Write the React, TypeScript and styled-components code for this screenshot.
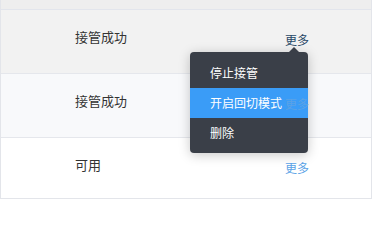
import styled, { createGlobalStyle } from "styled-components"

const GlobalStyle = createGlobalStyle`
  html, body {
    margin: 0;
    padding: 0;
    background: #fff;
  }
  body {
    font-family: "Noto Sans CJK SC", "Noto Sans", sans-serif;
    font-size: 13px;
  }
`

type Row = {
  status: string
  tone: "hover" | "stripe" | "plain"
  height: number
  open?: boolean
}

const rows: Row[] = [
  { status: "接管成功", tone: "hover", height: 64, open: true },
  { status: "接管成功", tone: "stripe", height: 64 },
  { status: "可用", tone: "plain", height: 60 },
]

const menuItems = ["停止接管", "开启回切模式", "删除"]

const App = () => {
  return (
    <>
      <GlobalStyle />
      <TableStyled>
        <HeaderStrip />
        {rows.map((row, i) => (
          <RowStyled key={i} $tone={row.tone} $height={row.height}>
            <StatusCell>{row.status}</StatusCell>
            <ActionCell>
              <MoreLink $active={row.open}>更多</MoreLink>
              {row.open && (
                <Menu>
                  {menuItems.map((item, j) => (
                    <MenuItem key={item} $active={j === 1}>{item}</MenuItem>
                  ))}
                </Menu>
              )}
            </ActionCell>
          </RowStyled>
        ))}
      </TableStyled>
    </>
  )
}

export default App

const TableStyled = styled.div`
  width: 372px;
  box-sizing: border-box;
  border-left: 1px solid #e3e5ea;
  border-right: 1px solid #e3e5ea;
  border-bottom: 1px solid #e3e5ea;
  background: #fff;
`

const HeaderStrip = styled.div`
  height: 9px;
  background: #eeeeee;
  border-bottom: 1px solid #e2e5ec;
`

const toneColors = {
  hover: "#f2f2f2",
  stripe: "#f8f9fb",
  plain: "#ffffff",
}

const RowStyled = styled.div<{ $tone: Row["tone"]; $height: number }>`
  display: flex;
  align-items: flex-start;
  box-sizing: border-box;
  height: ${(p) => p.$height}px;
  padding-left: 74px;
  background: ${(p) => toneColors[p.$tone]};
  border-bottom: 1px solid #e5e7ec;
  &:last-child {
    border-bottom: none;
  }
`

const StatusCell = styled.div`
  width: 210px;
  padding-top: 18px;
  line-height: 18px;
  color: #333;
`

const ActionCell = styled.div`
  position: relative;
  padding-top: 21px;
  line-height: 18px;
`

const MoreLink = styled.span<{ $active?: boolean }>`
  position: relative;
  z-index: 3;
  font-size: 12px;
  color: ${(p) => (p.$active ? "#284866" : "#5aa2e6")};
  cursor: pointer;
`

const Menu = styled.div`
  position: absolute;
  top: 42px;
  left: -95px;
  width: 118px;
  padding: 6px 0 5px;
  background: #3a3f48;
  border-radius: 4px;
  box-shadow: 0 2px 12px rgba(0, 0, 0, 0.22);
  z-index: 2;
  &::before {
    content: "";
    position: absolute;
    top: -5px;
    left: 99px;
    border-left: 5px solid transparent;
    border-right: 5px solid transparent;
    border-bottom: 5px solid #3a3f48;
  }
`

const MenuItem = styled.div<{ $active?: boolean }>`
  height: 30px;
  line-height: 30px;
  padding-left: 20px;
  font-size: 12px;
  color: #fff;
  white-space: nowrap;
  background: ${(p) => (p.$active ? "#3a9cf7" : "transparent")};
`
